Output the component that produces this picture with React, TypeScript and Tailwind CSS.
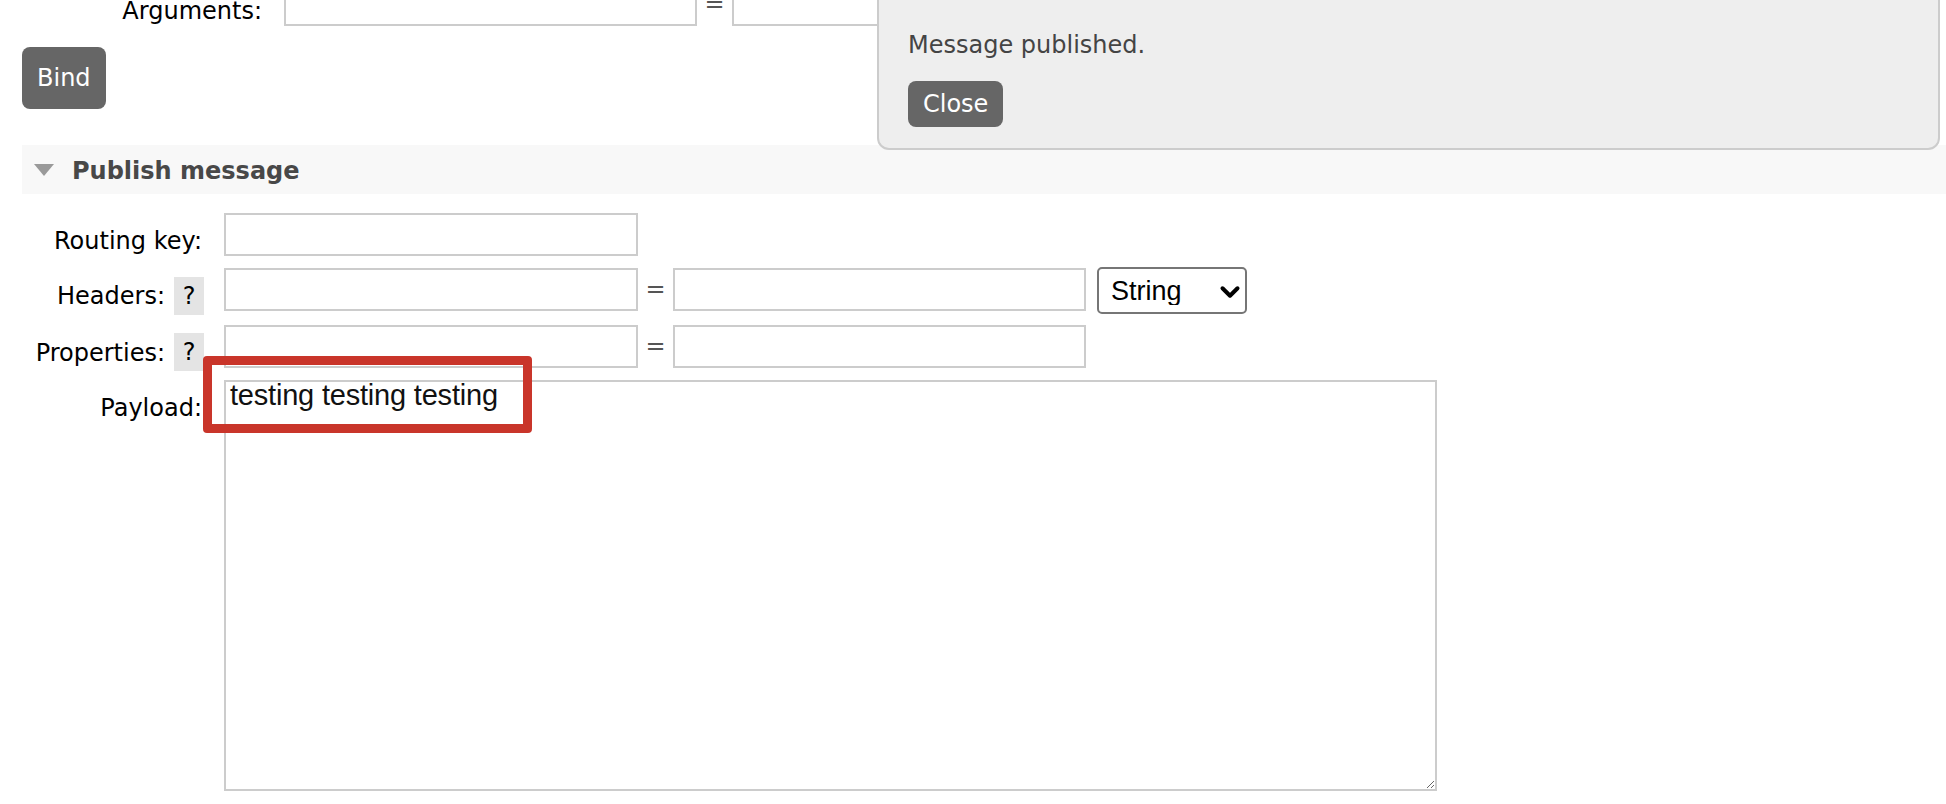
import React from 'react';
import { ChevronDown } from 'lucide-react';

const inputCls = 'h-[43px] border-2 border-[#cccccc] bg-white outline-none';

const Eq = () => (
  <span className="w-[35px] shrink-0 text-center leading-[43px] text-[#555]">=</span>
);

const Help = ({ top }: { top: string }) => (
  <span className={`${top} ml-[9px] block h-[38px] w-[30px] bg-[#e4e4e4] text-center leading-[38px]`}>?</span>
);

const App = () => {
  return (
    <div className="relative h-[804px] overflow-hidden bg-white font-['DejaVu_Sans',Verdana,sans-serif] text-[24px] leading-[28px] text-black">
      <div className="-mt-[17px] pl-[22px]">
        {/* tail of the bindings form */}
        <div className="flex items-start">
          <div className="w-[240px] shrink-0 pt-[18px] text-right leading-[20px]">Arguments:</div>
          <input className={`${inputCls} ml-[22px] w-[413px]`} />
          <Eq />
          <input className={`${inputCls} w-[413px]`} />
        </div>
        <button className="mt-[21px] h-[62px] rounded-[8px] bg-[#666666] px-[15px] text-white">Bind</button>

        {/* Publish message section */}
        <div className="mt-[36px] flex h-[49px] items-center bg-[#f8f8f8]">
          <svg className="ml-[12px] mt-[1px]" width="20" height="12" viewBox="0 0 20 12">
            <polygon points="0,0 20,0 10,12" fill="#9a9a9a" />
          </svg>
          <h2 className="ml-[18px] pt-[2px] font-bold text-[#484848]">Publish message</h2>
        </div>

        <div className="pt-[19px]">
          <div className="flex items-start">
            <div className="w-[180px] shrink-0 pt-[14px] text-right">Routing key:</div>
            <input className={`${inputCls} ml-[22px] w-[414px]`} />
          </div>

          <div className="mt-[12px] flex items-start">
            <div className="flex w-[182px] shrink-0 justify-end">
              <span className="pt-[14px]">Headers:</span>
              <Help top="mt-[9px]" />
            </div>
            <input className={`${inputCls} ml-[20px] w-[414px]`} />
            <Eq />
            <input className={`${inputCls} w-[413px]`} />
            <div className="relative -mt-px ml-[11px]">
              <select className="h-[47px] w-[150px] appearance-none rounded-[5px] border-2 border-[#767676] bg-white pl-[12px] font-['Liberation_Sans',Arial,sans-serif] text-[27px] text-black outline-none">
                <option>String</option>
              </select>
              <ChevronDown className="pointer-events-none absolute left-[118px] top-[10px] text-black" size={30} strokeWidth={3.2} />
            </div>
          </div>

          <div className="mt-[10px] flex items-start">
            <div className="flex w-[182px] shrink-0 justify-end">
              <span className="pt-[14px]">Properties:</span>
              <Help top="mt-[8px]" />
            </div>
            <input className={`${inputCls} ml-[20px] w-[414px]`} />
            <Eq />
            <input className={`${inputCls} w-[413px]`} />
          </div>

          <div className="mt-[9px] flex items-start">
            <div className="w-[180px] shrink-0 pt-[14px] text-right">Payload:</div>
            <textarea
              className="ml-[22px] h-[411px] w-[1213px] border-2 border-[#cccccc] bg-white pl-[4px] font-['Liberation_Sans',Arial,sans-serif] text-[29px] leading-[26px] tracking-[-0.2px] text-[#111] outline-none"
              defaultValue="testing testing testing"
            />
          </div>
        </div>
      </div>

      {/* notification popup */}
      <div className="absolute left-[877px] top-[-20px] h-[170px] w-[1063px] rounded-[12px] border-2 border-[#cccccc] bg-[#eeeeee] pl-[29px] pt-[49px]">
        <p className="text-[#444]">Message published.</p>
        <button className="mt-[22px] h-[46px] rounded-[8px] bg-[#666666] px-[15px] text-white">Close</button>
      </div>

      {/* annotation */}
      <div className="absolute left-[203px] top-[356px] h-[77px] w-[329px] rounded-[4px] border-[9px] border-[#c9352a]" />
    </div>
  );
};

export default App;
